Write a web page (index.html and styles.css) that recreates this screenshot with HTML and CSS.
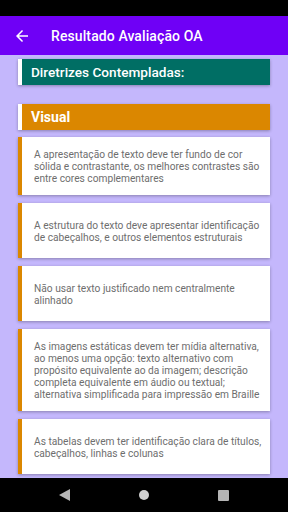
FILE: index.html
```html
<!DOCTYPE html>
<html lang="pt">
<head>
  <meta charset="UTF-8" />
  <meta name="viewport" content="width=device-width, initial-scale=1" />
  <title>Resultado Avaliação OA</title>
  <link rel="stylesheet" href="styles.css">
</head>
<body>
  <div class="screen">
    <div class="status-bar"></div>
    <header class="app-bar">
      <svg class="back" viewBox="0 0 24 24" width="18" height="18" aria-hidden="true">
        <path d="M20 11H7.83l5.59-5.59L12 4l-8 8 8 8 1.41-1.41L7.83 13H20v-2z" fill="#fff"/>
      </svg>
      <h1>Resultado Avaliação OA</h1>
    </header>

    <main class="content">
      <div class="heading heading-main">Diretrizes Contempladas:</div>

      <div class="heading heading-visual">Visual</div>

      <div class="item">A apresentação de texto deve ter fundo de cor sólida e contrastante, os melhores contrastes são entre cores complementares</div>
      <div class="item">A estrutura do texto deve apresentar identificação de cabeçalhos, e outros elementos estruturais</div>
      <div class="item">Não usar texto justificado nem centralmente alinhado</div>
      <div class="item">As imagens estáticas devem ter mídia alternativa, ao menos uma opção: texto alternativo com propósito equivalente ao da imagem; descrição completa equivalente em áudio ou textual; alternativa simplificada para impressão em Braille</div>
      <div class="item">As tabelas devem ter identificação clara de títulos, cabeçalhos, linhas e colunas</div>
    </main>

    <nav class="nav-bar">
      <span class="nav-back"></span>
      <span class="nav-home"></span>
      <span class="nav-recent"></span>
    </nav>
  </div>
</body>
</html>
```

FILE: styles.css
```css
:root {
  --font: Roboto, 'Liberation Sans', sans-serif;
  --purple: #6f00f6;
  --lavender: #c4b7fc;
  --teal: #006e64;
  --orange: #db8700;
  --text-gray: #6e6e6e;
}

* {
  box-sizing: border-box;
}

body {
  margin: 0;
  font-family: var(--font);
  background: var(--lavender);
}

.screen {
  width: 288px;
  height: 512px;
  display: flex;
  flex-direction: column;
  overflow: hidden;
}

.status-bar {
  height: 16px;
  background: #000;
  flex: none;
}

.app-bar {
  height: 39px;
  flex: none;
  background: var(--purple);
  display: flex;
  align-items: center;
  padding-left: 13px;
}

.back {
  display: block;
}

.app-bar h1 {
  margin: 0 0 0 20px;
  font-size: 14px;
  font-weight: 500;
  color: #fff;
  letter-spacing: 0.1px;
}

.content {
  flex: 1;
  overflow: hidden;
  padding: 4px 18px 0;
  display: flex;
  flex-direction: column;
}

.heading {
  height: 26px;
  display: flex;
  align-items: center;
  padding-left: 9px;
  color: #fff;
  border-left: 4px solid #fff;
  box-shadow: 0 1px 3px rgb(0 0 0 / 0.3);
}

.heading-main {
  background: var(--teal);
  font-size: 13.6px;
  font-weight: 500;
}

.heading-visual {
  margin-top: 19px;
  background: var(--orange);
  font-size: 14px;
  font-weight: 700;
}

.item {
  margin-top: 8px;
  min-height: 55px;
  display: flex;
  align-items: center;
  padding: 12px 7px 10px 12px;
  background: #fff;
  border-left: 4px solid var(--orange);
  box-shadow: 0 1px 3px rgb(0 0 0 / 0.3);
  color: var(--text-gray);
  font-size: 10.2px;
  line-height: 12px;
}

.heading-visual + .item {
  margin-top: 7px;
}

.nav-bar {
  height: 34px;
  flex: none;
  background: #000;
  display: flex;
  align-items: center;
  justify-content: center;
  gap: 69px;
}

.nav-back {
  width: 0;
  height: 0;
  border-top: 6px solid transparent;
  border-bottom: 6px solid transparent;
  border-right: 11px solid #b5b5b5;
}

.nav-home {
  width: 10px;
  height: 10px;
  border-radius: 50%;
  background: #d0d0d0;
}

.nav-recent {
  width: 11px;
  height: 11px;
  background: #b5b5b5;
  border-radius: 1px;
}
```
